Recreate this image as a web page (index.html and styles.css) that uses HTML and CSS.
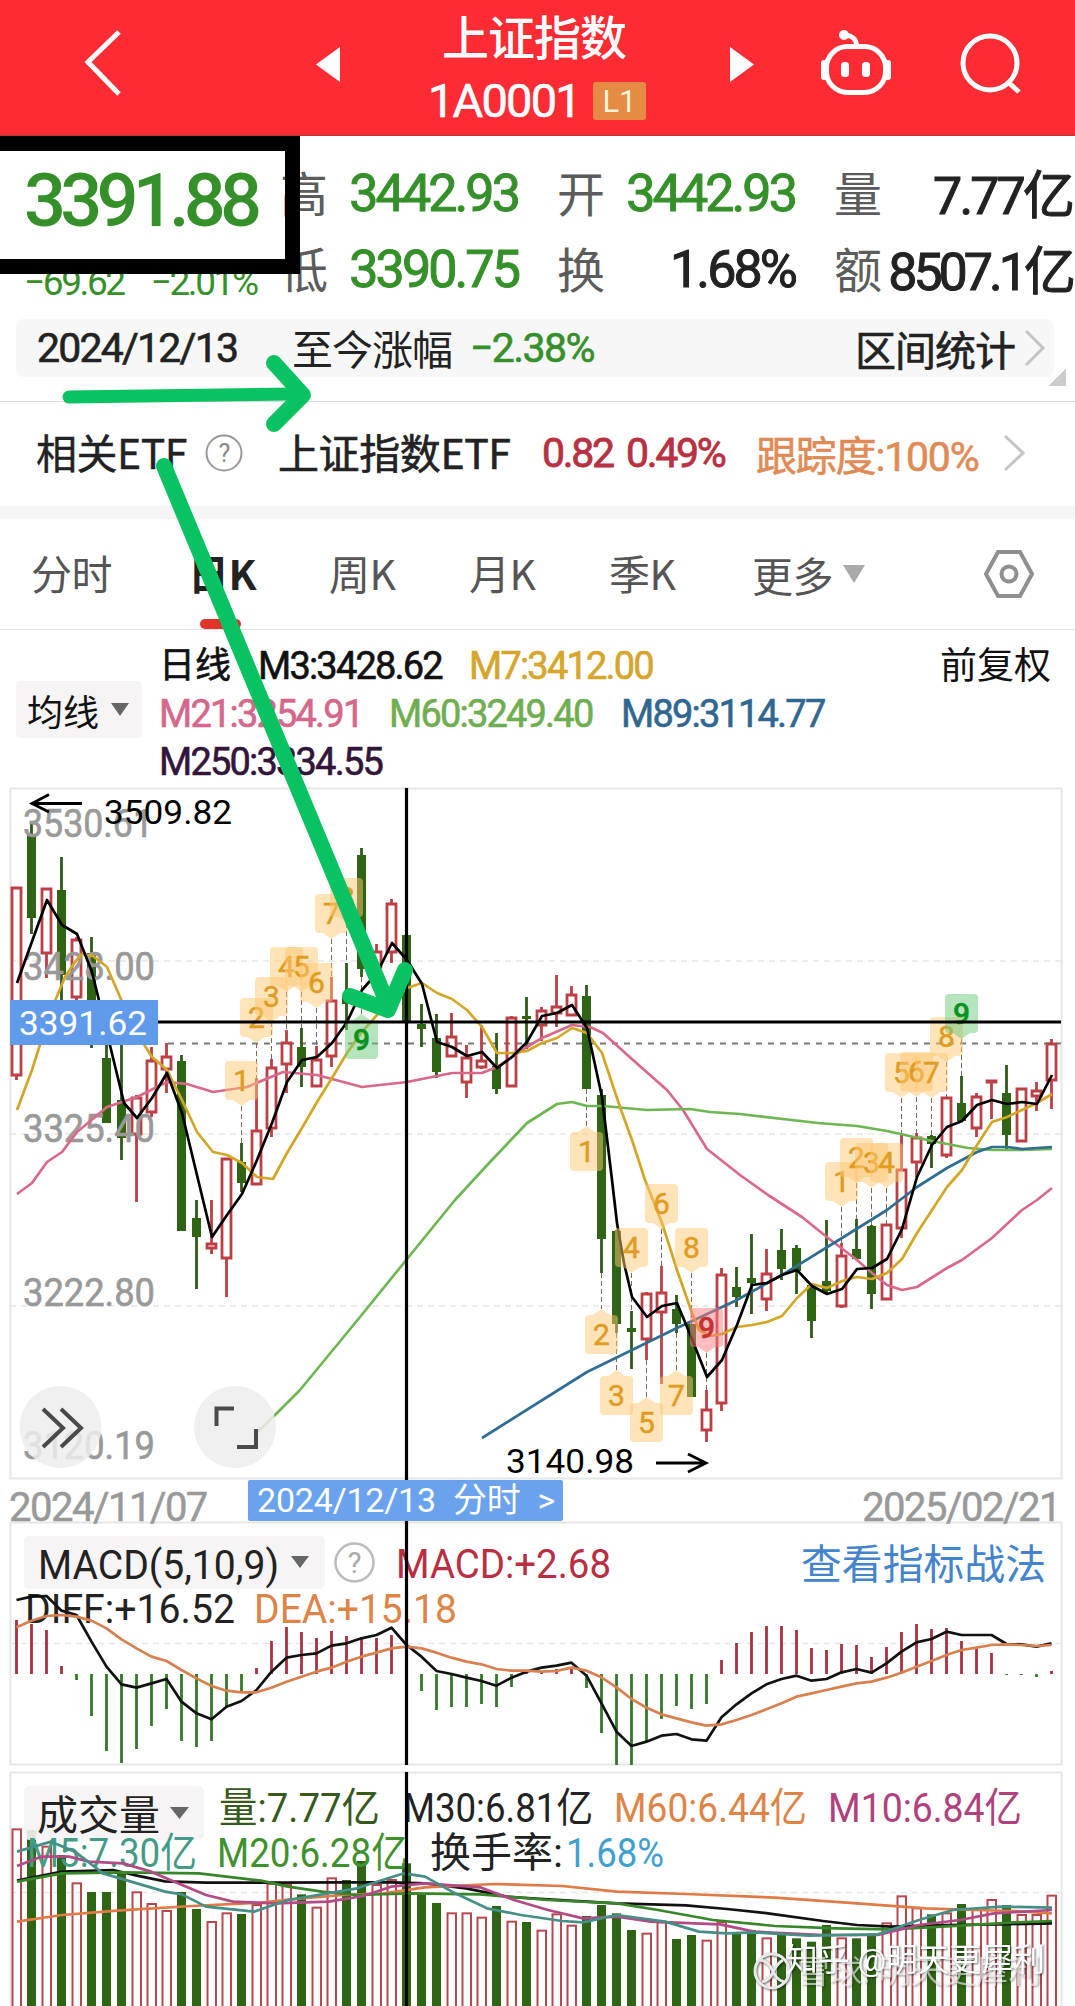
FILE: index.html
```html
<!DOCTYPE html>
<html lang="zh-CN">
<head>
    <meta charset="UTF-8">
    <meta name="viewport" content="width=device-width, initial-scale=1.0">
    <title>上证指数 1A0001</title>
    <link rel="stylesheet" href="styles.css">
</head>
<body>
    <header class="topbar">
        <svg class="back" width="44" height="70" viewBox="0 0 44 70"><path d="M36 4 L5 34 L36 66"/></svg>
        <svg class="prev" width="26" height="38" viewBox="0 0 26 38"><path d="M25 1 V36 L1 18.5Z"/></svg>
        <div class="title">
            <div class="name">上证指数</div>
            <div class="code">1A0001<span class="level">L1</span></div>
        </div>
        <svg class="next" width="26" height="38" viewBox="0 0 26 38"><path d="M1 1 V36 L25 18.5Z"/></svg>
        <svg class="robot" width="72" height="68" viewBox="0 0 72 68">
            <rect x="6.500" y="17.500" width="59" height="46" rx="21"/>
            <path d="M37 17 C36 10 33 7 26 6"/>
            <circle class="fill" cx="24" cy="6" r="5"/>
            <rect class="fill" x="1" y="31" width="6" height="20" rx="3"/>
            <rect class="fill" x="65" y="31" width="6" height="20" rx="3"/>
            <rect class="fill" x="21" y="33" width="8" height="15" rx="3.500"/>
            <rect class="fill" x="42" y="33" width="8" height="15" rx="3.500"/>
        </svg>
        <svg class="search" width="64" height="66" viewBox="0 0 64 66"><circle cx="30" cy="31" r="27"/><path d="M49 51 L59 60"/></svg>
    </header>

    <section class="quote">
        <div class="now">
            <div class="price">3391.88</div>
            <div class="change"><span>−69.62</span><span>−2.01%</span></div>
        </div>
        <div class="stats">
            <div class="stat"><label>高</label><b class="down">3442.93</b></div>
            <div class="stat"><label>开</label><b class="down">3442.93</b></div>
            <div class="stat"><label>量</label><b>7.77亿</b></div>
            <div class="stat"><label>低</label><b class="down">3390.75</b></div>
            <div class="stat"><label>换</label><b>1.68%</b></div>
            <div class="stat"><label>额</label><b class="tight">8507.1亿</b></div>
        </div>
    </section>

    <section class="range">
        <span class="day">2024/12/13</span>
        <span class="since">至今涨幅</span>
        <span class="pct">−2.38%</span>
        <span class="count">区间统计</span>
        <svg width="22" height="38" viewBox="0 0 22 38"><path d="M2 2 L19 19 L2 36"/></svg>
    </section>
    <div class="corner"></div>

    <section class="etf">
        <span class="rel">相关ETF</span>
        <svg class="help" width="38" height="38" viewBox="0 0 38 38"><circle cx="19" cy="19" r="17.500"/><text x="19" y="28" text-anchor="middle">?</text></svg>
        <span class="fund">上证指数ETF</span>
        <span class="up v1">0.82</span>
        <span class="up v2">0.49%</span>
        <span class="track">跟踪度:100%</span>
        <svg width="22" height="38" viewBox="0 0 22 38"><path d="M2 2 L20 19 L2 36"/></svg>
    </section>

    <nav class="tabs">
        <a>分时</a>
        <a class="active">日K</a>
        <a>周K</a>
        <a>月K</a>
        <a>季K</a>
        <a class="more">更多<i></i></a>
        <svg width="50" height="48" viewBox="0 0 50 48"><path d="M14 2 H36 L48 24 L36 46 H14 L2 24Z"/><circle cx="25" cy="24" r="7.500"/></svg>
    </nav>

    <section class="legend">
        <div class="picker">均线<i></i></div>
        <div class="averages">
            <div class="line"><span class="m-day">日线</span><span class="m3">M3:3428.62</span><span class="m7">M7:3412.00</span></div>
            <div class="line"><span class="m21">M21:3254.91</span><span class="m60">M60:3249.40</span><span class="m89">M89:3114.77</span></div>
            <div class="line"><span class="m250">M250:3334.55</span></div>
        </div>
        <div class="adjust">前复权</div>
    </section>

    <svg class="chart" id="kline" width="1075" height="733" viewBox="0 785 1075 733">
        <path class="frame" d="M10.500 1478.500 V788.500 H1061.500 V1478.500Z"/>
        <path class="grid" d="M10 961H1061 M10 1134H1061 M10 1306H1061"/>
        <path class="last" d="M168 1043.500H1061"/>
        <g id="links"></g>
        <g id="candles"></g>
        <g class="axis">
            <text x="23" y="837" textLength="130">3530.61</text>
            <text x="23" y="980" textLength="132">3428.00</text>
            <text x="23" y="1142" textLength="132">3325.40</text>
            <text x="23" y="1306" textLength="132">3222.80</text>
            <text x="23" y="1459" textLength="132">3120.19</text>
        </g>
        <g id="lines"></g>
        <g id="badges"></g>
        <path class="cross" d="M406.500 788V1480 M158 1022H1061"/>
        <rect class="tag" x="10" y="1000" width="148" height="45"/>
        <text class="tagtext" x="19" y="1035" textLength="128">3391.62</text>
        <g class="extreme">
            <text x="104" y="824" textLength="128">3509.82</text>
            <path d="M82 803.500H32 M49 794.500L32 803.500L49 812"/>
            <text x="506" y="1473" textLength="128">3140.98</text>
            <path d="M656 1463H706 M688 1454L706 1463L688 1472"/>
        </g>
        <circle class="knob" cx="60.500" cy="1427" r="41"/>
        <path class="knobicon" d="M43 1409L63 1428L43 1447 M61 1409L81 1428L61 1447"/>
        <circle class="knob" cx="235" cy="1427" r="41"/>
        <path class="knobicon" d="M216.500 1426V1408.500H234 M237 1447H256V1429"/>
    </svg>

    <svg class="chart" id="macd" width="1075" height="252" viewBox="0 1518 1075 252">
        <path class="frame" d="M10.500 1764.500V1522.500H1061.500V1764.500Z"/>
        <path class="grid" d="M10 1643.500H1061"/>
        <rect class="pill" x="24" y="1536" width="301" height="53" rx="5"/>
        <path class="caret" d="M291 1556H309L300 1568Z"/>
        <circle class="helpring" cx="354.500" cy="1562.500" r="19"/>
        <text class="helpmark" x="354.500" y="1573" text-anchor="middle">?</text>
        <g class="labels">
            <text x="38" y="1579" textLength="241">MACD(5,10,9)</text>
            <text class="c-red" x="396" y="1578" textLength="215">MACD:+2.68</text>
            <text class="c-blue" x="801" y="1579" textLength="245">查看指标战法</text>
            <text x="25" y="1623" textLength="210">DIFF:+16.52</text>
            <text class="c-orange" x="254" y="1623" textLength="203">DEA:+15.18</text>
        </g>
        <g id="macdbars"></g>
        <g id="macdlines"></g>
        <path class="cross" d="M406.500 1521V1765"/>
    </svg>

    <svg class="chart" id="volume" width="1075" height="236" viewBox="0 1770 1075 236">
        <path class="frame" d="M10.500 2010V1772.500H1061.500V2010"/>
        <path class="grid" d="M10 1892.500H1061"/>
        <g id="volbars"></g>
        <rect class="pill" x="24" y="1786" width="180" height="54" rx="5"/>
        <path class="caret" d="M170 1807H189L179.500 1819Z"/>
        <g class="labels">
            <text x="37" y="1830" textLength="123">成交量</text>
            <text class="c-dark" x="219" y="1822" textLength="161">量:7.77亿</text>
            <text x="403" y="1822" textLength="190">M30:6.81亿</text>
            <text class="c-orange" x="614" y="1822" textLength="193">M60:6.44亿</text>
            <text class="c-plum" x="828" y="1822" textLength="194">M10:6.84亿</text>
            <text class="c-teal" x="27" y="1867" textLength="170">M5:7.30亿</text>
            <text class="c-green" x="217" y="1867" textLength="191">M20:6.28亿</text>
            <text x="430" y="1867" textLength="133">换手率:</text>
            <text class="c-sky" x="566" y="1867" textLength="98">1.68%</text>
        </g>
        <g id="vollines"></g>
        <path class="cross" d="M406.500 1772V2006"/>
        <g class="mark">
            <circle cx="772" cy="1971" r="17"/>
            <path d="M760 1960 C775 1962 770 1978 784 1982 M783 1960 C770 1968 776 1978 762 1982"/>
            <text class="faint" x="797" y="1983" textLength="244">雪球: 明天更犀利</text>
            <text x="786" y="1971" textLength="259">知乎 @明天更犀利</text>
        </g>
    </svg>

    <div class="daterow">
        <span>2024/11/07</span>
        <span>2025/02/21</span>
    </div>
    <div class="pickday"><span>2024/12/13</span><span>分时</span><span>&gt;</span></div>

    <!-- hand-drawn marks on top of everything -->
    <div class="pricebox"></div>
    <svg class="marker" width="1075" height="2006" viewBox="0 0 1075 2006">
        <path class="thin" d="M69 397 L296 394"/>
        <path d="M274 363 L303 395 L274 424"/>
        <path d="M164 466 L388 1005"/>
        <path d="M350 996 L388 1010 L405 970"/>
    </svg>

    <script src="script.js"></script>
</body>
</html>
```
FILE: styles.css
```css
* {
    box-sizing: border-box;
}

body {
    margin: 0;
    width: 1075px;
    height: 2006px;
    position: relative;
    overflow: hidden;
    background: #fff;
    color: #222;
    font-family: Roboto, "Noto Sans CJK SC", sans-serif;
    font-size: 41px;
    letter-spacing: -0.05em;
    white-space: nowrap;
}

svg {
    display: block;
    flex: none;
}

.topbar {
    display: flex;
    height: 136px;
    background: #fd2c34;
    border-bottom: 1px solid #b8383c;
    color: #fff;
}

.topbar svg {
    fill: none;
    stroke: #fff;
    stroke-width: 5;
}

.back {
    margin: 28px 0 0 83px;
}

.topbar .prev,
.topbar .next {
    fill: #fff;
    stroke: none;
    margin-top: 46px;
}

.topbar .prev {
    margin-left: 188px;
}

.title {
    width: 260px;
    margin-left: 63px;
    text-align: center;
}

.name {
    margin-top: 8px;
    font-size: 47px;
    line-height: 62px;
    font-weight: 500;
    letter-spacing: -1px;
}

.code {
    display: flex;
    align-items: center;
    height: 61px;
    padding-left: 24px;
    font-size: 47px;
    letter-spacing: -1.800px;
    -webkit-text-stroke: 0.600px;
}

.level {
    margin-left: 13px;
    width: 53px;
    height: 38px;
    border-radius: 3px;
    background: #e58b43;
    color: #fff3d8;
    font-size: 31px;
    line-height: 39px;
    letter-spacing: 0;
    -webkit-text-stroke: 0;
}

.topbar .next {
    margin-left: 65px;
}

.robot {
    margin: 29px 0 0 65px;
}

.robot .fill {
    fill: #fff;
    stroke: none;
}

.search {
    margin: 32px 0 0 68px;
}

/* quote */
.quote {
    display: flex;
    height: 183px;
}

.now {
    width: 281px;
    padding-left: 24px;
    color: #35902a;
}

.price {
    margin-top: 22px;
    font-size: 74px;
    line-height: 86px;
    font-weight: 500;
    letter-spacing: -5.800px;
}

.change {
    display: flex;
    gap: 27px;
    margin-top: 15px;
    font-size: 37px;
    line-height: 48px;
    letter-spacing: -2.400px;
}

.stats {
    display: grid;
    grid-template-columns: 238px 238px 238px;
    grid-auto-rows: 76px;
    column-gap: 39px;
    margin-top: 19px;
}

.stat {
    display: flex;
    justify-content: space-between;
    align-items: center;
}

.stat label {
    margin: -5px 0 0 -1px;
    font-size: 48px;
    color: #5c5c5c;
}

.stat b {
    margin-right: 1px;
    font-size: 52px;
    font-weight: 400;
    letter-spacing: -2.900px;
    -webkit-text-stroke: 1px;
}

.stat:nth-child(3n) b {
    margin-top: -4px;
}

.stat .tight {
    letter-spacing: -4px;
}

.down,
.pct {
    color: #35902a;
}

/* range row */
.range {
    display: flex;
    align-items: center;
    margin: 0 21px 0 16px;
    height: 58px;
    padding-left: 21px;
    border-radius: 8px;
    background: #f7f7f8;
}

.day {
    width: 255px;
    letter-spacing: -1.800px;
    -webkit-text-stroke: 0.600px;
}

.since {
    width: 178px;
    margin-top: -3px;
    letter-spacing: -1px;
}

.pct {
    width: 385px;
    letter-spacing: -1.600px;
    -webkit-text-stroke: 0.600px;
}

.count {
    width: 169px;
    letter-spacing: -1px;
    -webkit-text-stroke: 0.600px;
}

.range svg,
.etf > svg:last-child {
    fill: none;
    stroke: #c4c4c4;
    stroke-width: 3;
}

.corner {
    width: 18px;
    height: 18px;
    margin: -9px 0 15px 1048px;
    background: linear-gradient(135deg, transparent 50%, #ccc 50%);
}

/* etf row */
.etf {
    display: flex;
    align-items: center;
    height: 118px;
    padding: 0 0 2px 36px;
    border-top: 1px solid #dcdcdc;
    border-bottom: 13px solid #f6f6f7;
    letter-spacing: -1px;
    font-family: "Noto Sans CJK SC", sans-serif;
}

.rel {
    width: 169px;
    margin-top: -4px;
    letter-spacing: -0.500px;
    -webkit-text-stroke: 0.400px;
}

.help circle {
    fill: none;
    stroke: #999;
    stroke-width: 2;
}

.help text {
    font-family: Roboto, sans-serif;
    font-size: 25px;
    fill: #888;
}

.fund {
    width: 264px;
    margin-top: -4px;
    margin-left: 35px;
    letter-spacing: -0.400px;
    -webkit-text-stroke: 0.600px;
}

.up,
.track {
    font-family: Roboto, "Noto Sans CJK SC", sans-serif;
}

.up {
    color: #b83041;
    letter-spacing: -2.300px;
    -webkit-text-stroke: 0.800px;
}

.v1 {
    width: 84px;
}

.v2 {
    width: 130px;
}

.track {
    width: 247px;
    color: #e08b55;
    letter-spacing: -1.200px;
    -webkit-text-stroke: 0.600px;
}

/* period tabs */
.tabs {
    display: flex;
    align-items: center;
    height: 111px;
    padding-left: 31px;
    border-bottom: 1px solid #e0e0e0;
    font-family: "Noto Sans CJK SC", sans-serif;
    letter-spacing: -0.500px;
    color: #555;
}

.tabs a {
    position: relative;
    flex: none;
    width: 140px;
    height: 90px;
    line-height: 86px;
}

.tabs a:first-child {
    width: 157px;
}

.tabs a:nth-child(2) {
    width: 141px;
}

.tabs .active {
    color: #222;
    font-weight: 700;
}

.tabs .active::after {
    content: "";
    position: absolute;
    left: 12px;
    bottom: -10px;
    width: 41px;
    height: 10px;
    border-radius: 5px;
    background: #e0332c;
}

.tabs .more {
    width: 232px;
    margin-left: 3px;
    display: flex;
    align-items: center;
    line-height: 82px;
}

.more i {
    margin-left: 10px;
    border: 11px solid transparent;
    border-top: 18px solid #aaa;
    border-bottom: 0;
}

.tabs svg {
    fill: none;
    stroke: #8f8f8f;
    stroke-width: 4;
}

/* moving average legend */
.legend {
    display: flex;
    height: 155px;
    padding: 12px 0 0 16px;
    font-size: 38px;
    color: #111;
}

.picker {
    display: flex;
    align-items: center;
    width: 126px;
    height: 57px;
    margin-top: 39px;
    padding-left: 11px;
    border-radius: 5px;
    background: #f6f4f5;
    font-size: 36px;
    letter-spacing: 0;
}

.picker i {
    margin-left: 12px;
    border: 9px solid transparent;
    border-top: 13px solid #666;
    border-bottom: 0;
}

.averages {
    width: 798px;
    padding-left: 17px;
}

.line {
    display: flex;
    height: 48px;
    line-height: 48px;
    -webkit-text-stroke: 0.600px;
}

.line span {
    flex: none;
    letter-spacing: -1.800px;
}

.line .m-day {
    width: 99px;
    font-size: 36px;
    letter-spacing: 0;
}

.m3 {
    width: 211px;
}

.m7 {
    color: #d5a52c;
}

.m21 {
    width: 230px;
    color: #d5678a;
}

.m60 {
    width: 232px;
    color: #6fae50;
}

.m89 {
    color: #2f6790;
}

.m250 {
    color: #33143a;
}

.adjust {
    font-size: 37px;
    line-height: 50px;
    letter-spacing: 0;
}

/* charts */
.chart {
    fill: none;
    letter-spacing: 0;
}

.frame {
    stroke: #e6e6e6;
    stroke-width: 2;
}

.grid {
    stroke: #e6e6e6;
    stroke-width: 1.500;
    stroke-dasharray: 6 5;
}

.last {
    stroke: #777;
    stroke-width: 1.800;
    stroke-dasharray: 6 6;
}

.axis text {
    font-size: 38px;
    fill: #999;
    stroke: #999;
    stroke-width: 0.600;
}

.cross {
    stroke: #000;
    stroke-width: 3.200;
}

.tag {
    fill: #5f9bea;
}

.tagtext {
    font-size: 34px;
    fill: #fff;
}

.extreme text {
    font-size: 34px;
    fill: #000;
}

.extreme path {
    stroke: #000;
    stroke-width: 2.800;
}

.knob {
    fill: #ededed;
    fill-opacity: 0.850;
}

.knobicon {
    stroke: #4a4a4a;
    stroke-width: 4;
}

.rise {
    stroke: #bd3f46;
    stroke-width: 2.800;
}

.fall {
    stroke: #2f5a18;
    stroke-width: 2.800;
}

.fallbody {
    fill: #2f6414;
}

.link {
    stroke: #806a55;
    stroke-width: 1;
    stroke-dasharray: 5 3;
}

.badge path {
    fill: #ffc873;
    fill-opacity: 0.500;
}

.badge text {
    font-size: 30px;
    fill: #e09c22;
    stroke: #e09c22;
    stroke-width: 0.500;
    text-anchor: middle;
}

.badge.green path {
    fill: #6cc97b;
}

.badge.green text {
    fill: #0a9320;
    stroke: #0a9320;
    font-weight: 500;
}

.badge.red path {
    fill: #ff7b80;
}

.badge.red text {
    fill: #c8312f;
    stroke: #c8312f;
    font-weight: 500;
}

.series {
    stroke-width: 2.700;
    stroke-linejoin: round;
}

.pill {
    fill: #f6f3f4;
    fill-opacity: 0.900;
}

.caret {
    fill: #666;
}

.helpring {
    stroke: #bbb;
    stroke-width: 2.500;
}

.helpmark {
    font-size: 29px;
    fill: #aaa;
}

.labels text {
    font-size: 41px;
    fill: #222;
    -webkit-text-stroke: 0.500px;
}

.labels .c-red { fill: #b92e42; }
.labels .c-blue { fill: #4384cd; }
.labels .c-orange { fill: #df8447; }
.labels .c-dark { fill: #38591c; }
.labels .c-plum { fill: #b0417d; }
.labels .c-teal { fill: #439b87; }
.labels .c-green { fill: #3e912c; }
.labels .c-sky { fill: #419fd0; }

.mark {
    filter: drop-shadow(1px 1px 1px rgba(0, 0, 0, 0.600));
}

.mark text {
    font-size: 32px;
    fill: #fff;
}

.mark .faint {
    fill-opacity: 0.600;
}

.mark circle,
.mark path {
    stroke: #e8e8e8;
    stroke-width: 3;
}

/* dates lie over the gap between the two upper charts */
.daterow {
    position: absolute;
    left: 9px;
    top: 1484px;
    width: 1051px;
    display: flex;
    justify-content: space-between;
    font-size: 40px;
    line-height: 47px;
    letter-spacing: -1.500px;
    color: #999;
    -webkit-text-stroke: 0.500px;
}

.pickday {
    position: absolute;
    left: 248px;
    top: 1480px;
    width: 315px;
    height: 41px;
    padding-left: 9px;
    display: flex;
    gap: 17px;
    border-radius: 2px;
    background: #6ba2ee;
    color: #fff;
    font-size: 34px;
    line-height: 41px;
    letter-spacing: -0.200px;
}

.pricebox {
    position: absolute;
    left: 0;
    top: 136px;
    width: 300px;
    height: 138px;
    border: 15px solid #000;
    border-left: 0;
}

.marker {
    position: absolute;
    left: 0;
    top: 0;
    fill: none;
    stroke: #09c362;
    stroke-width: 16;
    stroke-linecap: round;
    stroke-linejoin: round;
}

.marker .thin {
    stroke-width: 13;
}
```
FILE: script.js
```js
// column i sits at X(i)
const X = i => 16.5 + 15 * i;
const get = id => document.getElementById(id);

// r = rise, g = fall: high, body top, body bottom, low
const candles = [
    ['r', 887, 888, 1075, 1080], ['g', 823, 835, 918, 934], ['r', 888, 889, 953, 978], ['g', 857, 890, 975, 1002],
    ['r', 937, 940, 997, 1003], ['g', 937, 953, 1037, 1048], ['g', 1043, 1058, 1123, 1123], ['g', 1043, 1100, 1138, 1160],
    ['r', 1095, 1098, 1134, 1202], ['r', 1047, 1061, 1112, 1117], ['r', 1043, 1057, 1069, 1093], ['g', 1055, 1061, 1231, 1231],
    ['g', 1200, 1218, 1237, 1289], ['r', 1200, 1244, 1248, 1254], ['r', 1158, 1159, 1258, 1297], ['g', 1143, 1162, 1183, 1192],
    ['r', 1078, 1131, 1184, 1185], ['r', 1059, 1068, 1128, 1137], ['r', 1030, 1043, 1064, 1093], ['g', 1028, 1047, 1067, 1087],
    ['r', 1046, 1060, 1086, 1086], ['r', 977, 1001, 1056, 1067], ['g', 963, 997, 1004, 1030], ['g', 848, 855, 969, 977],
    ['r', 944, 952, 967, 970], ['r', 899, 904, 952, 963], ['g', 935, 935, 1022, 1022], ['g', 1004, 1024, 1029, 1047],
    ['g', 1014, 1038, 1072, 1078], ['r', 1013, 1037, 1056, 1056], ['r', 1045, 1058, 1082, 1098], ['r', 1025, 1061, 1067, 1069],
    ['g', 1033, 1066, 1089, 1094], ['r', 1016, 1018, 1086, 1087], ['g', 997, 1016, 1019, 1049], ['r', 1007, 1011, 1025, 1041],
    ['r', 975, 1007, 1013, 1027], ['r', 986, 995, 1015, 1015], ['g', 985, 996, 1089, 1089], ['g', 1089, 1095, 1239, 1273],
    ['g', 1230, 1231, 1324, 1333], ['g', 1311, 1328, 1332, 1369], ['r', 1292, 1294, 1339, 1360], ['r', 1266, 1293, 1312, 1384],
    ['g', 1295, 1309, 1324, 1333], ['g', 1324, 1324, 1397, 1397], ['r', 1390, 1410, 1430, 1442], ['r', 1268, 1275, 1403, 1411],
    ['g', 1267, 1287, 1297, 1307], ['g', 1234, 1278, 1283, 1314], ['r', 1249, 1274, 1299, 1311], ['g', 1229, 1250, 1269, 1280],
    ['g', 1245, 1248, 1271, 1294], ['g', 1283, 1285, 1321, 1338], ['g', 1220, 1281, 1291, 1294], ['r', 1243, 1256, 1306, 1308],
    ['g', 1219, 1249, 1259, 1259], ['g', 1225, 1226, 1294, 1309], ['r', 1224, 1225, 1299, 1300], ['r', 1134, 1170, 1228, 1238],
    ['r', 1133, 1138, 1162, 1177], ['g', 1135, 1136, 1144, 1168], ['r', 1097, 1098, 1155, 1158], ['g', 1076, 1103, 1121, 1121],
    ['r', 1093, 1097, 1128, 1137], ['r', 1081, 1081, 1082, 1119], ['g', 1065, 1093, 1135, 1149], ['r', 1088, 1089, 1141, 1142],
    ['r', 1082, 1091, 1096, 1111], ['r', 1039, 1044, 1080, 1109]
];

const averages = {
    '#d9688a': '17,1194 32,1183 47,1162 62,1152 77,1132 107,1107 137,1097 167,1082 187,1084 213,1092 247,1087 283,1072 317,1075 362,1087 407,1082 422,1079 452,1073 482,1073 497,1067 512,1057 527,1047 542,1038 572,1025 590,1027 603,1033 633,1060 667,1090 683,1110 707,1149 740,1175 768,1195 802,1217 828,1238 857,1260 872,1273 887,1285 902,1290 917,1287 947,1268 962,1260 992,1238 1022,1210 1037,1200 1052,1188',
    '#6fb653': '258,1432 273,1417 300,1390 360,1317 420,1243 455,1200 490,1162 527,1123 557,1104 572,1102 587,1106 603,1106 647,1110 690,1109 710,1112 740,1114 818,1123 857,1126 887,1131 932,1141 968,1148 992,1150 1022,1150 1052,1149',
    '#2f6d92': '482,1438 587,1372 632,1350 677,1328 735,1301 782,1275 842,1238 887,1210 917,1187 947,1168 977,1152 992,1147 1007,1147 1022,1149 1052,1147',
    '#d3a626': '17,1110 32,1070 50,1013 65,977 75,962 82,954 93,956 107,967 117,990 133,1027 152,1057 167,1070 182,1100 197,1132 213,1152 227,1155 242,1163 257,1177 273,1179 287,1153 302,1128 317,1102 332,1078 347,1053 362,1032 377,1015 393,1000 407,988 422,983 437,993 452,999 467,1010 482,1027 497,1053 512,1053 527,1051 542,1043 557,1038 572,1028 587,1033 602,1053 620,1107 633,1143 645,1180 662,1223 677,1270 692,1313 699,1330 710,1336 722,1334 737,1327 752,1325 767,1322 782,1316 797,1298 812,1284 827,1288 842,1281 857,1277 872,1279 887,1273 902,1259 917,1233 932,1210 947,1187 962,1170 977,1145 992,1122 1007,1117 1022,1110 1037,1103 1052,1094',
    '#000000': '17,983 47,900 62,925 77,934 92,972 107,1033 124,1103 137,1118 152,1098 167,1073 182,1113 203,1200 212,1237 227,1215 242,1194 257,1160 272,1123 287,1082 302,1060 317,1057 332,1043 347,1022 362,990 377,973 392,943 407,960 422,984 437,1042 452,1047 467,1056 482,1052 497,1068 512,1057 527,1042 542,1016 557,1013 572,1005 587,1028 602,1097 612,1180 617,1223 624,1263 632,1297 647,1317 662,1306 677,1303 692,1339 707,1377 722,1360 737,1325 752,1285 767,1283 782,1275 797,1270 812,1286 827,1294 842,1289 857,1269 872,1268 887,1259 902,1229 917,1177 932,1145 947,1127 962,1121 977,1105 992,1100 1007,1104 1022,1102 1037,1104 1052,1075'
};

// column, digit, body top, side of the candle, colour
const badges = [
    [15, 1, 1061, 'up'], [16, 2, 998, 'up'], [17, 3, 977, 'up'], [18, 4, 947, 'up'], [19, 5, 947, 'up'], [20, 6, 963, 'up'],
    [21, 7, 894, 'up'], [22, 8, 878, 'up'], [23, 9, 1020, 'dn', 'green'],
    [38, 1, 1132, 'dn'], [39, 2, 1315, 'dn'], [40, 3, 1376, 'dn'], [42, 5, 1403, 'dn'], [44, 7, 1376, 'dn'],
    [41, 4, 1228, 'up'], [43, 6, 1184, 'up'], [45, 8, 1228, 'up'], [46, 9, 1308, 'up', 'red'],
    [55, 1, 1162, 'up'], [56, 2, 1138, 'up'], [57, 3, 1143, 'up'], [58, 4, 1143, 'up'],
    [59, 5, 1053, 'up'], [60, 6, 1052, 'up'], [61, 7, 1053, 'up'], [62, 8, 1017, 'up'], [63, 9, 994, 'up', 'green']
];

const macdBars = [1620, 1624, 1630, 1666, 1680, 1716, 1751, 1763, 1749, 1726, 1709, 1741, 1747, 1741, 1707, 1692, 1668, 1641,
    1627, 1632, 1638, 1631, 1636, 1637, 1638, 1635, 1674, 1691, 1710, 1707, 1707, 1704, 1707, 1687, 1672, 1671, 1669, 1668,
    1688, 1733, 1765, 1765, 1741, 1719, 1706, 1709, 1704, 1660, 1643, 1632, 1626, 1626, 1630, 1648, 1650, 1644, 1645, 1657,
    1647, 1632, 1624, 1629, 1628, 1641, 1648, 1653, 1675, 1675, 1677, 1671];
const diff = [300, 290, 288, 332, 345, 425, 500, 553, 563, 550, 537, 605, 640, 658, 620, 603, 570, 515, 473, 465, 460, 437, 430,
    415, 405, 383, 435, 470, 513, 522, 533, 543, 557, 533, 515, 503, 497, 488, 527, 610, 695, 738, 725, 707, 702, 718, 722, 652,
    613, 580, 553, 537, 527, 542, 537, 517, 507, 518, 490, 455, 427, 417, 395, 405, 405, 405, 432, 433, 440, 430];
const dea = [382, 362, 348, 345, 350, 362, 385, 418, 445, 470, 483, 510, 535, 558, 572, 577, 577, 563, 545, 530, 515, 503, 485,
    470, 458, 445, 440, 445, 458, 473, 485, 493, 507, 512, 512, 515, 513, 503, 512, 532, 562, 597, 623, 643, 655, 667, 677, 673,
    660, 645, 628, 610, 590, 580, 570, 560, 550, 545, 533, 518, 500, 483, 465, 450, 443, 435, 433, 435, 438, 435];

const volumes = [208, 210, 260, 285, 370, 396, 396, 335, 397, 432, 453, 396, 447, 486, 460, 462, 435, 372, 375, 403, 443, 355,
    360, 303, 375, 360, 310, 403, 429, 460, 460, 473, 438, 485, 486, 512, 463, 497, 468, 435, 460, 510, 521, 487, 537, 525, 542,
    487, 520, 510, 535, 525, 535, 545, 495, 535, 535, 520, 490, 409, 445, 463, 460, 432, 447, 420, 435, 465, 465, 407];
const volumeLines = {
    '#111111': [17, 362, 62, 335, 113, 330, 137, 347, 165, 364, 206, 368, 274, 368, 343, 367, 391, 367, 425, 370, 466, 385, 507, 410, 548, 418, 617, 430, 686, 436, 727, 447, 768, 460, 823, 483, 857, 495, 891, 500, 946, 495, 1001, 493, 1052, 490],
    '#e27a45': [17, 485, 62, 465, 117, 452, 192, 438, 261, 428, 302, 415, 343, 405, 384, 400, 425, 382, 494, 372, 562, 378, 617, 395, 686, 402, 775, 413, 857, 430, 926, 445, 974, 450, 1015, 453, 1052, 460],
    '#37862a': [17, 365, 62, 340, 123, 337, 199, 340, 261, 362, 288, 380, 322, 395, 357, 405, 411, 400, 480, 403, 548, 420, 617, 430, 658, 450, 713, 480, 775, 498, 836, 505, 891, 508, 960, 497, 1015, 487, 1052, 483],
    '#b24a86': [17, 318, 41, 290, 69, 290, 89, 305, 123, 310, 151, 335, 178, 370, 206, 405, 233, 425, 274, 430, 329, 425, 363, 408, 391, 380, 425, 370, 480, 382, 514, 420, 548, 450, 583, 475, 617, 470, 651, 485, 720, 493, 754, 515, 823, 525, 878, 525, 919, 495, 960, 480, 994, 460, 1052, 450],
    '#458f86': [17, 275, 51, 245, 75, 275, 103, 340, 137, 370, 165, 395, 182, 403, 206, 440, 254, 455, 288, 420, 322, 403, 357, 385, 377, 365, 404, 340, 425, 350, 452, 395, 487, 445, 521, 465, 562, 483, 583, 487, 617, 465, 665, 485, 699, 515, 727, 520, 754, 517, 809, 527, 878, 523, 919, 480, 953, 450, 1001, 440, 1052, 443]
};

const series = (points, color) => `<polyline class="series" stroke="${color}" points="${points}"/>`;

get('candles').innerHTML = candles.map(([kind, high, top, bottom, low], i) => {
    const x = X(i);
    if (kind === 'g') {
        return `<path class="fall" d="M${x} ${high}V${low}"/><rect class="fallbody" x="${x - 4.5}" y="${top}" width="9" height="${bottom - top}"/>`;
    }
    return `<path class="rise" d="M${x} ${high}V${top} M${x} ${bottom}V${low} M${x - 4.5} ${top}H${x + 4.5}V${bottom}H${x - 4.5}Z"/>`;
}).join('');

get('lines').innerHTML = Object.entries(averages).map(([color, points]) => series(points, color)).join('');

get('links').innerHTML = badges.map(([i, , top, side]) => {
    const from = side === 'up' ? top + 45 : candles[i][4];
    const to = side === 'up' ? candles[i][1] : top - 6;
    return `<path class="link" d="M${X(i)} ${from}V${to}"/>`;
}).join('');

get('badges').innerHTML = badges.map(([i, digit, top, side, color = '']) => {
    const x = X(i) - 16.5;
    const tip = side === 'up'
        ? `M${x + 4} ${top}h25q4 0 4 4v31q0 4 -4 4h-4l-8.500 6l-8.500 -6h-4q-4 0 -4 -4v-31q0 -4 4 -4Z`
        : `M${x + 4} ${top + 39}h25q4 0 4 -4v-31q0 -4 -4 -4h-4l-8.500 -6l-8.500 6h-4q-4 0 -4 4v31q0 4 4 4Z`;
    return `<g class="badge ${color}"><path d="${tip}"/><text x="${X(i)}" y="${top + 30}">${digit}</text></g>`;
}).join('');

get('macdbars').innerHTML = macdBars.map((y, i) =>
    `<path stroke="${y < 1674 ? '#a9323f' : '#337a27'}" stroke-width="2.800" d="M${X(i)} 1674V${y}"/>`).join('');

const row = values => values.map((v, i) => `${X(i)},${1500 + v / 3}`).join(' ');
get('macdlines').innerHTML = series(row(diff), '#111') + series(row(dea), '#d8804f');

get('volbars').innerHTML = volumes.map((v, i) => {
    const y = 1760 + v / 3;
    return candles[i][0] === 'g'
        ? `<rect class="fallbody" x="${X(i) - 4.5}" y="${y}" width="9" height="300"/>`
        : `<rect stroke="#b8484e" stroke-width="2" x="${X(i) - 4}" y="${y}" width="8.500" height="300"/>`;
}).join('');

get('vollines').innerHTML = Object.entries(volumeLines).map(([color, list]) =>
    series(list.map((v, k) => k % 2 ? 1760 + v / 3 : v).join(' '), color)).join('');

// squeeze the glyphs as well as the gaps
document.querySelectorAll('text[textLength]').forEach(t => t.setAttribute('lengthAdjust', 'spacingAndGlyphs'));
```
